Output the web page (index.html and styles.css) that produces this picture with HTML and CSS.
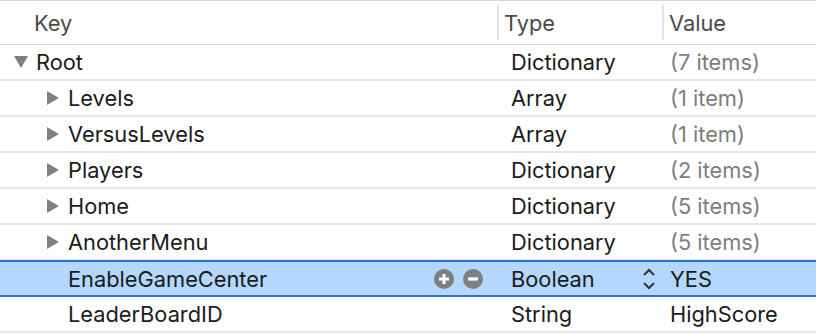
FILE: index.html
```html
<!DOCTYPE html>
<html lang="en">
<head>
  <meta charset="UTF-8">
  <title>Info.plist</title>
  <link rel="stylesheet" href="styles.css">
</head>
<body>

  <div class="plist">
    <div class="linha cabecalho">
      <div class="celula chave"><span class="titulo">Key</span></div>
      <div class="celula tipo"><span class="titulo">Type</span></div>
      <div class="celula valor"><span class="titulo">Value</span></div>
    </div>

    <div class="linha">
      <div class="celula chave nivel0"><span class="seta aberta"></span>Root</div>
      <div class="celula tipo">Dictionary</div>
      <div class="celula valor cinza">(7 items)</div>
    </div>

    <div class="linha">
      <div class="celula chave nivel1"><span class="seta"></span>Levels</div>
      <div class="celula tipo">Array</div>
      <div class="celula valor cinza">(1 item)</div>
    </div>

    <div class="linha">
      <div class="celula chave nivel1"><span class="seta"></span>VersusLevels</div>
      <div class="celula tipo">Array</div>
      <div class="celula valor cinza">(1 item)</div>
    </div>

    <div class="linha">
      <div class="celula chave nivel1"><span class="seta"></span>Players</div>
      <div class="celula tipo">Dictionary</div>
      <div class="celula valor cinza">(2 items)</div>
    </div>

    <div class="linha">
      <div class="celula chave nivel1"><span class="seta"></span>Home</div>
      <div class="celula tipo">Dictionary</div>
      <div class="celula valor cinza">(5 items)</div>
    </div>

    <div class="linha">
      <div class="celula chave nivel1"><span class="seta"></span>AnotherMenu</div>
      <div class="celula tipo">Dictionary</div>
      <div class="celula valor cinza">(5 items)</div>
    </div>

    <div class="linha selecionada">
      <div class="celula chave nivel1">
        <span class="seta vazia"></span>EnableGameCenter
        <span class="botoes">
          <svg width="20" height="20" viewBox="0 0 20 20"><circle cx="10" cy="10" r="10" fill="#7f7f7f"/><path d="M10 5v10M5 10h10" stroke="#fff" stroke-width="3.2"/></svg>
          <svg width="20" height="20" viewBox="0 0 20 20"><circle cx="10" cy="10" r="10" fill="#7f7f7f"/><path d="M5 10h10" stroke="#fff" stroke-width="3.2"/></svg>
        </span>
      </div>
      <div class="celula tipo">
        Boolean
        <svg class="stepper" width="14" height="24" viewBox="0 0 14 24"><path d="M2 8l5-5 5 5M2 16l5 5 5-5" fill="none" stroke="#333" stroke-width="2"/></svg>
      </div>
      <div class="celula valor">YES</div>
    </div>

    <div class="linha">
      <div class="celula chave nivel1"><span class="seta vazia"></span>LeaderBoardID</div>
      <div class="celula tipo">String</div>
      <div class="celula valor">HighScore</div>
    </div>
  </div>

</body>
</html>
```

FILE: styles.css
```css
* {
  box-sizing: border-box;
}

body {
  margin: 0;
  background: #fff;
  font-family: Inter, 'Open Sans', sans-serif;
  font-size: 21.8px;
  color: #1b1b1b;
}

.plist {
  border-top: 1px solid #d8d8d8;
}

.linha {
  display: grid;
  grid-template-columns: 497px 165px 1fr;
  height: 36px;
  border-bottom: 2px solid #e6e6e6;
}

.cabecalho {
  height: 44px;
  border-bottom: 1px solid #d4d4d4;
  color: #4a4a4a;
}

.celula {
  display: flex;
  align-items: center;
  white-space: nowrap;
}

.cabecalho .celula {
  padding: 4px 0;
}

.cabecalho .chave { padding-left: 34px; }

.cabecalho .tipo,
.cabecalho .valor {
  padding-left: 0;
}

.titulo {
  display: flex;
  align-items: center;
  height: 100%;
}

.cabecalho .tipo .titulo,
.cabecalho .valor .titulo {
  border-left: 2px solid #e4e4e4;
  padding-left: 5px;
}

.tipo { padding-left: 14px; padding-right: 6px; justify-content: space-between; }
.valor { padding-left: 8px; }

.cinza { color: #7d7d7d; }

.nivel0 { padding-left: 14px; }
.nivel1 { padding-left: 47px; padding-right: 14px; }

.seta {
  width: 0;
  height: 0;
  margin-right: 9px;
  border-top: 7px solid transparent;
  border-bottom: 7px solid transparent;
  border-left: 12px solid #808080;
}

.seta.aberta {
  margin-right: 8px;
  border-left: 7px solid transparent;
  border-right: 7px solid transparent;
  border-top: 12px solid #808080;
  border-bottom: 0;
}

.seta.vazia {
  border-left-color: transparent;
}

.botoes {
  margin-left: auto;
  display: flex;
  gap: 9px;
}

.botoes svg { display: block; }

.selecionada {
  height: 37px;
  background: #b4d7fe;
  border-top: 2px solid #2a6fce;
  border-bottom: 2px solid #2a6fce;
  margin-top: -1px;
}

.stepper { display: block; }
```
